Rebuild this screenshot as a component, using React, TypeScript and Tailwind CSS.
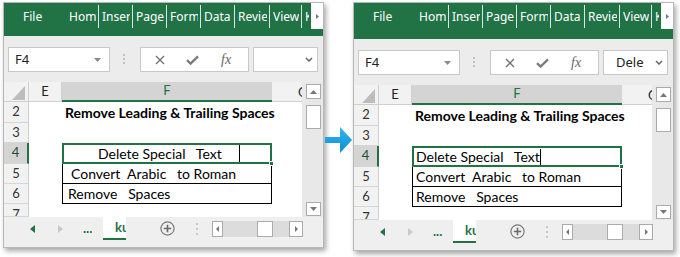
import React from "react";

const tabs: [string, string][] = [
  ["Home", "w-[32px]"],
  ["Insert", "w-[33px]"],
  ["Page Layout", "w-[33px]"],
  ["Formulas", "w-[33px]"],
  ["Data", "w-[33px]"],
  ["Review", "w-[34px]"],
  ["View", "w-[31px]"],
  ["Kutools", "w-[9px]"],
];

function Ribbon({ tall }: { tall?: boolean }) {
  return (
    <div className={`${tall ? "h-[36px]" : "h-[33px]"} bg-[#217346] font-['Noto_Sans'] text-[12px] text-white`}>
      <div className="flex h-[26px] items-center">
        <div className="w-[62px] pl-[19px] pt-[2px]">File</div>
        {tabs.map(([label, w], i) => (
          <React.Fragment key={label}>
            {i > 0 && <div className="h-[23px] w-px shrink-0 bg-[#dbe8e0]" />}
            <div className={`${w} shrink-0 pl-[3px] pr-[2px] pt-[2px]`}>
              <div className="overflow-hidden whitespace-nowrap">{label}</div>
            </div>
          </React.Fragment>
        ))}
        <div className="flex h-full w-[12px] items-center justify-center bg-white">
          <svg width="3" height="5" viewBox="0 0 3 5">
            <path d="M0 0v5l3-2.5z" fill="#777" />
          </svg>
        </div>
      </div>
    </div>
  );
}

function FormulaBar({ after }: { after?: boolean }) {
  return (
    <div className="flex h-[46px] items-start bg-[#ececec] pt-[11px] font-['Noto_Sans'] text-[#222]">
      <div className="ml-[4px] flex h-[25px] w-[102px] items-center justify-between border border-[#c8c8c8] bg-white pl-[6px] pr-[8px] text-[13px]">
        <span>F4</span>
        <svg width="7" height="4" viewBox="0 0 7 4">
          <path d="M0 0h7L3.5 4z" fill="#8a8a8a" />
        </svg>
      </div>
      <svg className="ml-[13px] mt-[7px]" width="2" height="10" viewBox="0 0 2 10">
        <rect y="0" width="2" height="2" fill="#c2c2c2" />
        <rect y="4" width="2" height="2" fill="#c2c2c2" />
        <rect y="8" width="2" height="2" fill="#c2c2c2" />
      </svg>
      <div className="ml-[15px] flex h-[25px] w-[109px] items-center border border-[#c8c8c8] bg-white">
        <svg className="ml-[14px]" width="10" height="10" viewBox="0 0 10 10">
          <path d="M1 1l8 8M9 1l-8 8" stroke="#707070" strokeWidth="1.3" />
        </svg>
        <svg className="ml-[21px]" width="13" height="10" viewBox="0 0 13 10">
          <path d="M1 5.2l3.6 3.4L12 1.4" stroke="#7a7a7a" strokeWidth="2.3" fill="none" />
        </svg>
        <span className="ml-[22px] font-['Liberation_Serif'] text-[14px] italic text-[#666]">fx</span>
      </div>
      <div className="ml-[4px] flex h-[25px] w-[65px] items-center border border-[#c8c8c8] bg-white">
        {after && <span className="ml-[12px] text-[13px]">Dele</span>}
        <svg className="ml-auto mr-[4px]" width="8" height="5" viewBox="0 0 8 5">
          <path d="M1 1l3 3 3-3" stroke="#666" strokeWidth="1.5" fill="none" />
        </svg>
      </div>
    </div>
  );
}

function RowHead({ n, sel, cut }: { n: number; sel?: boolean; cut?: boolean }) {
  return (
    <div
      className={`flex w-[25px] shrink-0 justify-center overflow-hidden border-b border-b-[#d6d6d6] text-[13px] ${
        cut ? "items-start leading-[20px]" : "items-center"
      } ${sel ? "border-r-2 border-r-[#217346] bg-[#d4d4d4] text-[#1e4d32]" : "border-r border-r-[#cfcfcf] bg-[#f2f2f2] text-[#333]"}`}
    >
      {n}
    </div>
  );
}

function Grid({ after }: { after?: boolean }) {
  return (
    <div className="flex h-[135px] font-['Lato'] text-[14px]">
      <div className="flex w-[298px] flex-col overflow-hidden">
        <div className="flex h-[20px] shrink-0 bg-[#f2f2f2] text-[13px] text-[#222]">
          <div className="flex w-[25px] items-end justify-end border-r border-b border-[#cfcfcf] pr-[3px] pb-[1px]">
            <svg width="13" height="14" viewBox="0 0 13 14">
              <path d="M13 0v14H0z" fill="#bdbdbd" />
            </svg>
          </div>
          <div className="flex w-[33px] items-center justify-center border-r border-b border-[#cfcfcf]">E</div>
          <div className="flex w-[210px] items-center justify-center border-b-2 border-[#217346] bg-[#d4d4d4] text-[#217346]">F</div>
          <div className="flex-1 overflow-hidden border-b border-[#cfcfcf] pl-[26px] leading-[20px]">G</div>
        </div>

        <div className="flex h-[21px] shrink-0">
          <RowHead n={2} />
          <div className="w-[33px]" />
          <div className="flex w-[210px] items-center whitespace-nowrap pl-[3px] font-bold text-black">
            Remove Leading &amp; Trailing Spaces
          </div>
        </div>

        <div className="flex h-[20px] shrink-0">
          <RowHead n={3} />
        </div>

        <div className="flex h-[21px] shrink-0">
          <RowHead n={4} sel />
          <div className="w-[33px]" />
          <div className="relative flex w-[210px] items-stretch border-2 border-[#217346] text-black">
            {after ? (
              <div className="flex items-center whitespace-pre pl-[2px]">
                Delete Special   Text
                <span className="h-[16px] w-px bg-black" />
              </div>
            ) : (
              <>
                <div className="flex w-[175px] items-center whitespace-pre pl-[34px]">Delete Special   Text</div>
                <div className="w-px bg-black" />
              </>
            )}
            <div className="absolute -right-[4px] -bottom-[4px] h-[5px] w-[5px] border border-white bg-[#217346]" />
          </div>
        </div>

        <div className="flex h-[20px] shrink-0">
          <RowHead n={5} />
          <div className="w-[33px]" />
          <div className={`flex w-[210px] items-center whitespace-pre border-x border-b border-black text-black ${after ? "pl-[3px]" : "pl-[8px]"}`}>
            Convert  Arabic   to Roman
          </div>
        </div>

        <div className="flex h-[20px] shrink-0">
          <RowHead n={6} />
          <div className="w-[33px]" />
          <div className={`flex w-[210px] items-center whitespace-pre border-x border-b border-black text-black ${after ? "pl-[3px]" : "pl-[5px]"}`}>
            Remove   Spaces
          </div>
        </div>

        <div className="flex h-[13px] shrink-0">
          <RowHead n={7} cut />
        </div>
      </div>

      <div className="flex w-[21px] flex-col bg-[#e8e8e8] pt-[2px] pr-[2px] pb-[1px] pl-[4px]">
        <div className="flex h-[15px] w-[15px] items-center justify-center border border-[#ababab] bg-white">
          <svg width="7" height="4" viewBox="0 0 7 4">
            <path d="M0 4h7L3.5 0z" fill="#777" />
          </svg>
        </div>
        <div className="mt-[6px] h-[24px] w-[15px] border border-[#ababab] bg-white" />
        <div className="flex-1" />
        <div className="flex h-[14px] w-[15px] items-center justify-center border border-[#ababab] bg-white">
          <svg width="7" height="4" viewBox="0 0 7 4">
            <path d="M0 0h7L3.5 4z" fill="#777" />
          </svg>
        </div>
      </div>
    </div>
  );
}

function SheetTabs() {
  return (
    <div className="h-[30px] bg-[#efefef] font-['Lato']">
      <div className="flex h-[23px] items-center">
        <svg className="ml-[26px]" width="5" height="8" viewBox="0 0 5 8">
          <path d="M5 0v8L0 4z" fill="#217346" />
        </svg>
        <svg className="ml-[23px]" width="5" height="8" viewBox="0 0 5 8">
          <path d="M0 0v8l5-4z" fill="#c8c8c8" />
        </svg>
        <span className="ml-[20px] w-[20px] text-[13px] font-bold text-[#217346]">...</span>
        <div className="h-full w-[23px] overflow-hidden whitespace-nowrap border-b-2 border-[#217346] bg-white pl-[12px] text-[13px] leading-[21px] font-bold text-[#217346]">
          kutools
        </div>
        <svg className="ml-[34px]" width="15" height="15" viewBox="0 0 15 15">
          <circle cx="7.5" cy="7.5" r="6.6" stroke="#7a7a7a" strokeWidth="1.2" fill="none" />
          <path d="M7.5 3.8v7.4M3.8 7.5h7.4" stroke="#6a6a6a" strokeWidth="1.6" />
        </svg>
        <svg className="ml-[21px]" width="2" height="12" viewBox="0 0 2 12">
          <rect y="0" width="2" height="2" fill="#c8c8c8" />
          <rect y="5" width="2" height="2" fill="#c8c8c8" />
          <rect y="10" width="2" height="2" fill="#c8c8c8" />
        </svg>
        <div className="ml-[14px] flex h-[16px] w-[91px] items-stretch bg-[#dcdcdc]">
          <div className="flex w-[11px] items-center justify-center border border-[#ababab] bg-white">
            <svg width="3" height="6" viewBox="0 0 3 6">
              <path d="M3 0v6L0 3z" fill="#777" />
            </svg>
          </div>
          <div className="ml-[34px] w-[16px] border border-[#ababab] bg-white" />
          <div className="ml-auto flex w-[14px] items-center justify-center border border-[#ababab] bg-white">
            <svg width="3" height="6" viewBox="0 0 3 6">
              <path d="M0 0v6l3-3z" fill="#777" />
            </svg>
          </div>
        </div>
      </div>
    </div>
  );
}

function ExcelWindow({ after }: { after?: boolean }) {
  return (
    <div className="flex w-[321px] shrink-0 flex-col border border-[#b8b8b8] bg-white shadow-[2px_3px_5px_rgba(0,0,0,0.35)]">
      <Ribbon tall={after} />
      <FormulaBar after={after} />
      <Grid after={after} />
      <SheetTabs />
    </div>
  );
}

export default function App() {
  return (
    <div className="flex h-[257px] w-[680px] items-start overflow-hidden bg-white pt-[2px] pl-[3px]">
      <ExcelWindow />
      <svg className="mt-[125px] shrink-0" width="29" height="26" viewBox="0 0 29 26">
        <defs>
          <linearGradient id="arrowFill" x1="0" y1="0" x2="0" y2="1">
            <stop offset="0" stopColor="#35b3f0" />
            <stop offset="1" stopColor="#0a8fd6" />
          </linearGradient>
        </defs>
        <path d="M1 10h15V0l12 13-12 13V16H1z" fill="url(#arrowFill)" />
      </svg>
      <ExcelWindow after />
    </div>
  );
}
